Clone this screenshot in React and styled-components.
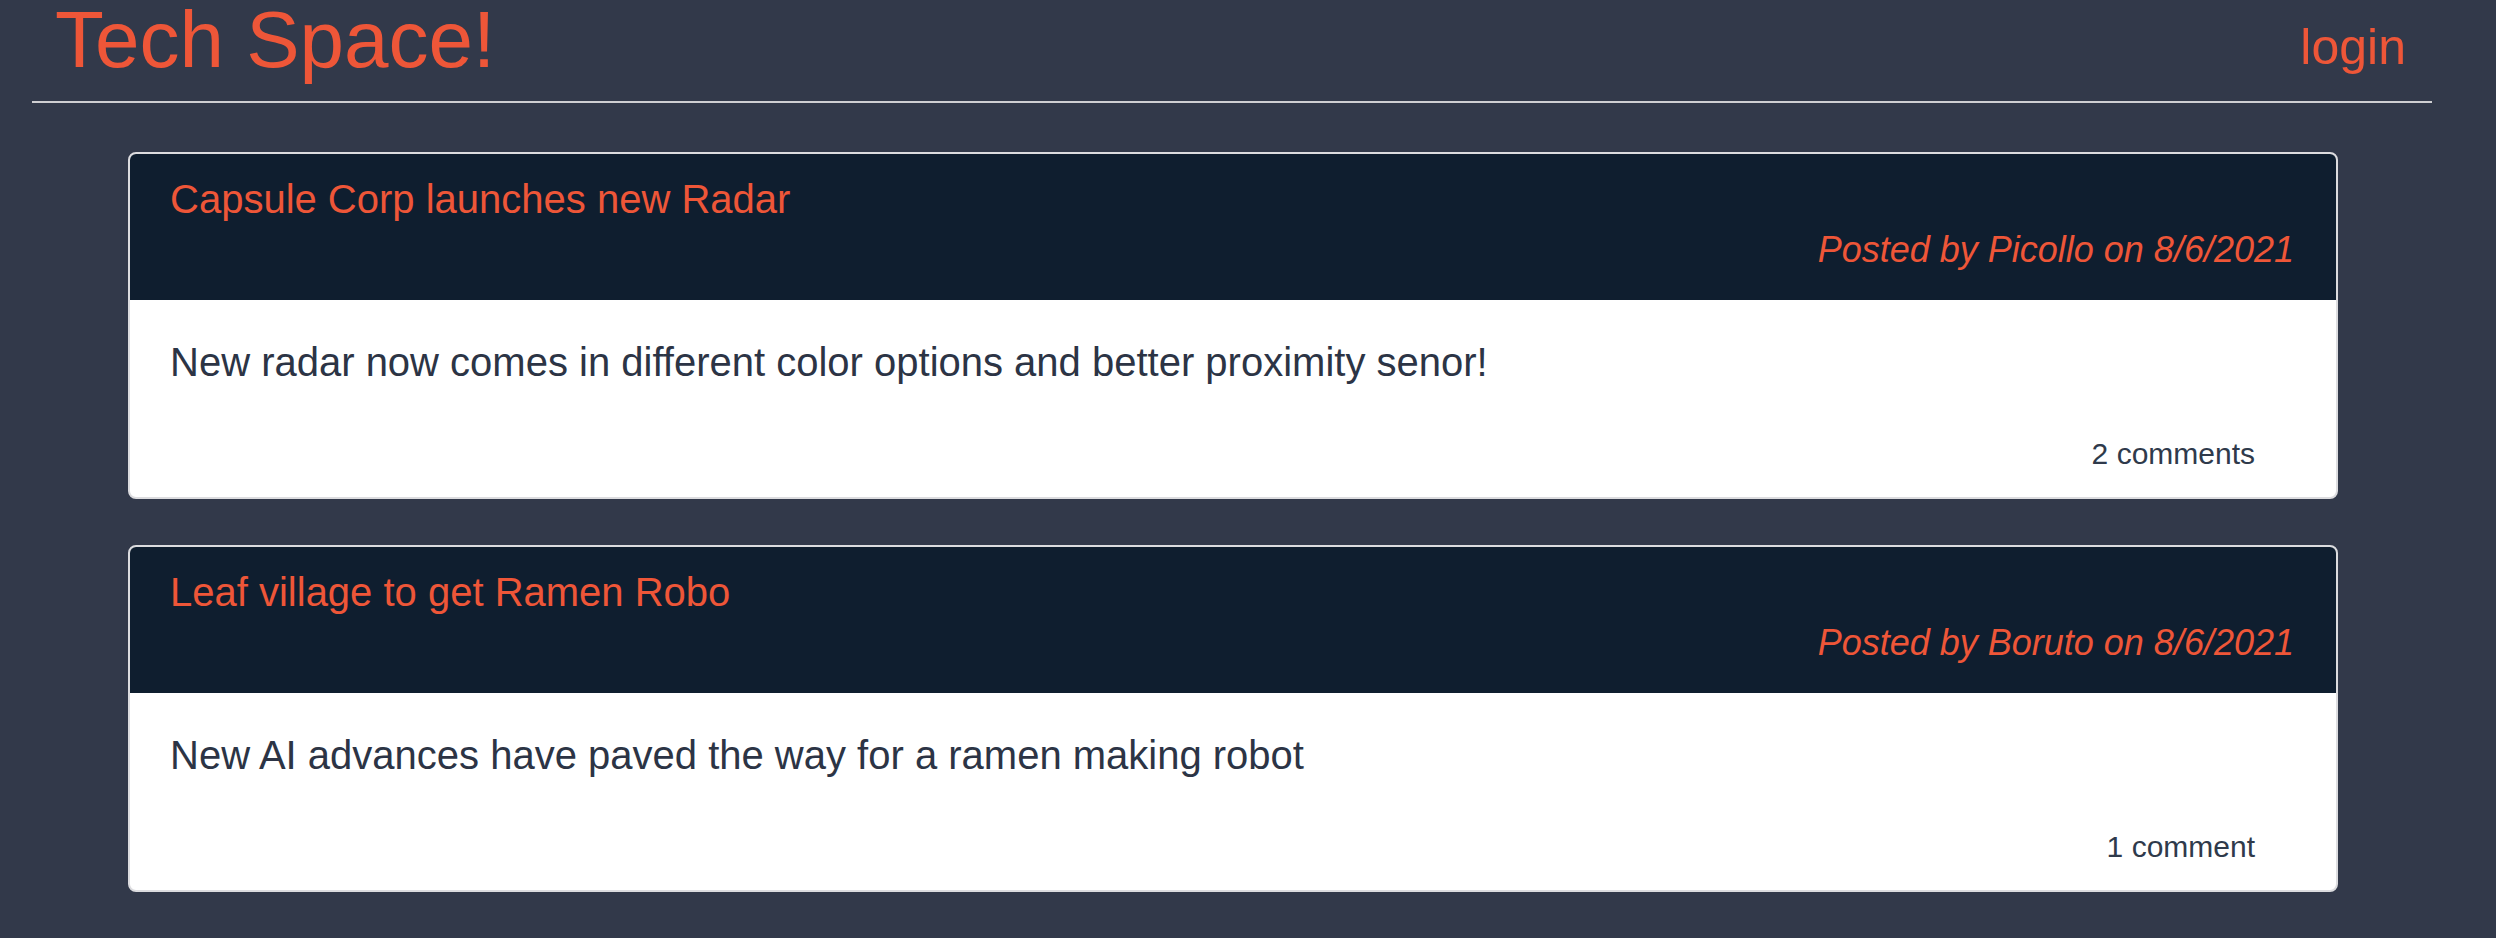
import styled, { createGlobalStyle } from "styled-components";

const posts = [
  {
    id: 1,
    title: "Capsule Corp launches new Radar",
    author: "Picollo",
    date: "8/6/2021",
    content:
      "New radar now comes in different color options and better proximity senor!",
    comments: 2,
  },
  {
    id: 2,
    title: "Leaf village to get Ramen Robo",
    author: "Boruto",
    date: "8/6/2021",
    content: "New AI advances have paved the way for a ramen making robot",
    comments: 1,
  },
  {
    id: 3,
    title: "Hoi-Poi capsules now on sale",
    author: "Bulma",
    date: "8/5/2021",
    content: "Carry your whole house in your pocket",
    comments: 0,
  },
];

const GlobalStyle = createGlobalStyle`
  html, body {
    margin: 0;
    padding: 0;
    background-color: #32394a;
    font-family: "Liberation Sans", Arial, Helvetica, sans-serif;
  }
`;

function App() {
  return (
    <>
      <GlobalStyle />
      <Page>
        <Header>
          <Brand>Tech Space!</Brand>
          <NavLink href="#">login</NavLink>
        </Header>
        <PostList>
          {posts.map((post) => (
            <Card key={post.id}>
              <CardHeader>
                <PostTitle>{post.title}</PostTitle>
                <PostMeta>
                  Posted by {post.author} on {post.date}
                </PostMeta>
              </CardHeader>
              <CardBody>
                <PostText>{post.content}</PostText>
                <Comments>
                  {post.comments} {post.comments === 1 ? "comment" : "comments"}
                </Comments>
              </CardBody>
            </Card>
          ))}
        </PostList>
      </Page>
    </>
  );
}

export default App;

const Page = styled.div`
  min-height: 100vh;
  background-color: #32394a;
  overflow: hidden;
`;

const Header = styled.header`
  display: flex;
  justify-content: space-between;
  align-items: flex-start;
  margin: 0 64px 0 32px;
  padding: 0 26px 21px 23px;
  border-bottom: 2px solid #cfcfd2;
`;

const Brand = styled.h1`
  margin: 0;
  font-size: 80px;
  font-weight: normal;
  line-height: 1;
  color: #ee5638;
`;

const NavLink = styled.a`
  margin-top: 22px;
  font-size: 50px;
  line-height: 1;
  color: #ee5638;
  text-decoration: none;
`;

const PostList = styled.main`
  display: flex;
  flex-direction: column;
  gap: 46px;
  margin: 49px 158px 0 128px;
`;

const Card = styled.article`
  display: flex;
  flex-direction: column;
  background-color: #ffffff;
  border: 2px solid #dcdcdf;
  border-radius: 8px;
  overflow: hidden;
`;

const CardHeader = styled.div`
  display: flex;
  flex-direction: column;
  background-color: #0f1e2f;
  padding: 21px 42px 23px 40px;
`;

const PostTitle = styled.h5`
  margin: 0;
  font-size: 40px;
  font-weight: normal;
  line-height: 48px;
  color: #ee5638;
`;

const PostMeta = styled.p`
  margin: 0;
  font-size: 36px;
  font-style: italic;
  line-height: 54px;
  text-align: right;
  color: #ee5638;
`;

const CardBody = styled.div`
  display: flex;
  flex-direction: column;
  padding: 38px 40px 21px;
`;

const PostText = styled.p`
  margin: 0 0 45px;
  font-size: 40px;
  line-height: 48px;
  color: #2c3445;
`;

const Comments = styled.span`
  align-self: flex-end;
  padding-right: 41px;
  font-size: 30px;
  line-height: 45px;
  color: #2f3a4b;
`;
